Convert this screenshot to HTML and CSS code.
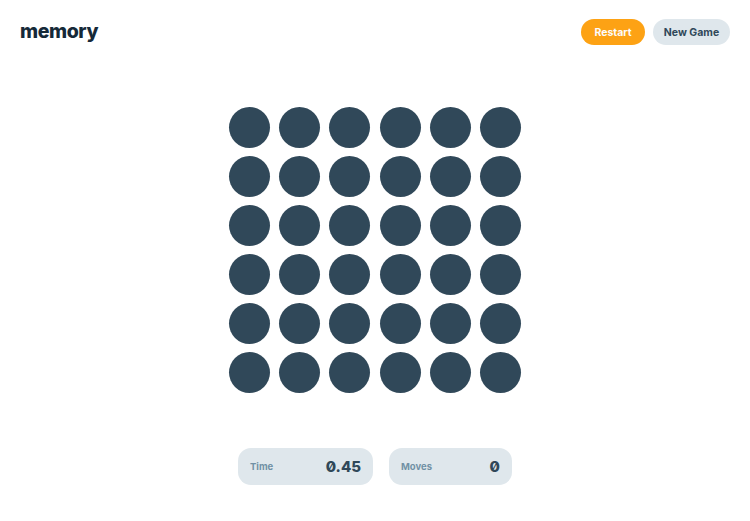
FILE: index.html
```html
<!DOCTYPE html>
<html>
  <head>
    <meta name="viewport" content="width=device-width, initial-scale=1" />
    <title>memory</title>
    <link rel="stylesheet" href="styles.css">
  </head>
  <body>
    <header class="top">
      <h1 class="logo">memory</h1>
      <nav class="actions">
        <button type="button" class="btn btn-restart">Restart</button>
        <button type="button" class="btn btn-new">New Game</button>
      </nav>
    </header>

    <main class="board">
      <div class="grid">
        <span class="dot"></span><span class="dot"></span><span class="dot"></span><span class="dot"></span><span class="dot"></span><span class="dot"></span>
        <span class="dot"></span><span class="dot"></span><span class="dot"></span><span class="dot"></span><span class="dot"></span><span class="dot"></span>
        <span class="dot"></span><span class="dot"></span><span class="dot"></span><span class="dot"></span><span class="dot"></span><span class="dot"></span>
        <span class="dot"></span><span class="dot"></span><span class="dot"></span><span class="dot"></span><span class="dot"></span><span class="dot"></span>
        <span class="dot"></span><span class="dot"></span><span class="dot"></span><span class="dot"></span><span class="dot"></span><span class="dot"></span>
        <span class="dot"></span><span class="dot"></span><span class="dot"></span><span class="dot"></span><span class="dot"></span><span class="dot"></span>
      </div>
    </main>

    <footer class="stats">
      <div class="stat stat-time">
        <span class="stat-label">Time</span>
        <span class="stat-value">0.45</span>
      </div>
      <div class="stat stat-moves">
        <span class="stat-label">Moves</span>
        <span class="stat-value">0</span>
      </div>
    </footer>
  </body>
</html>
```

FILE: styles.css
```css
/* ---------- reset ---------- */
* {
  margin: 0;
  padding: 0;
  box-sizing: border-box;
}

body {
  font-family: "Inter", "Noto Sans", sans-serif;
  background: #fff;
  color: #304859;
}

/* ---------- header ---------- */
.top {
  display: flex;
  justify-content: space-between;
  align-items: center;
  padding: 19px 20px 0 20px;
  height: 45px;
}

.logo {
  font-size: 19.5px;
  font-weight: 800;
  letter-spacing: -0.4px;
  color: #152938;
  line-height: 1;
  margin-top: -1px;
}

.actions {
  display: flex;
  gap: 8px;
}

.btn {
  border: 0;
  outline: 0;
  height: 26px;
  border-radius: 13px;
  font-family: inherit;
  font-size: 10.5px;
  font-weight: 700;
  cursor: pointer;
}

.btn-restart {
  width: 64px;
  background: #fda214;
  color: #fcfcfc;
}

.btn-new {
  width: 77px;
  background: #dfe7ec;
  color: #304859;
}

/* ---------- board ---------- */
.board {
  display: flex;
  justify-content: center;
  margin-top: 62px;
}

.grid {
  display: grid;
  grid-template-columns: repeat(6, 41px);
  grid-auto-rows: 41px;
  column-gap: 9.4px;
  row-gap: 8px;
}

.dot {
  display: block;
  border-radius: 50%;
  background: #304859;
}

/* ---------- stats ---------- */
.stats {
  display: flex;
  justify-content: center;
  gap: 16px;
  margin-top: 55px;
}

.stat {
  display: flex;
  justify-content: space-between;
  align-items: center;
  height: 37px;
  padding: 0 12px;
  border-radius: 13px;
  background: #dfe7ec;
}

.stat-time {
  width: 135px;
}

.stat-moves {
  width: 123px;
}

.stat-label {
  font-size: 9.5px;
  font-weight: 700;
  color: #7191a5;
}

.stat-value {
  font-size: 15px;
  font-weight: 800;
  color: #304859;
  font-feature-settings: "zero";
}
```
